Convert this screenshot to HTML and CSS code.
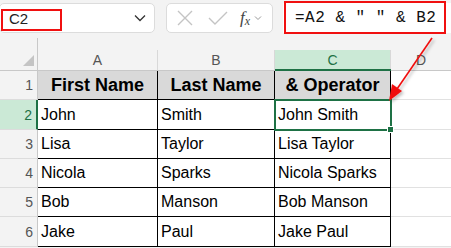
FILE: index.html
```html
<!DOCTYPE html>
<html lang="en">
   <head>
      <meta charset="UTF-8" />
      <meta name="viewport" content="width=device-width, initial-scale=1.0" />
      <title>Ampersand operator</title>
      <link rel="stylesheet" href="styles.css">
   </head>
   <body>
      <div class="wrap">
         <section class="toolbar">
            <div class="namebox">
               <span>C2</span>
               <svg class="chev" width="12" height="8" viewBox="0 0 12 8"><path d="M1 1.5 L6 6.5 L11 1.5" fill="none" stroke="#333" stroke-width="1.3"/></svg>
            </div>
            <div class="buttons">
               <svg width="18" height="18" viewBox="0 0 18 18"><path d="M2 2 L16 16 M16 2 L2 16" stroke="#c4c4c4" stroke-width="1.4" fill="none"/></svg>
               <svg width="20" height="16" viewBox="0 0 20 16"><path d="M1 8 L7 14 L19 2" stroke="#c4c4c4" stroke-width="1.4" fill="none"/></svg>
               <span class="fx">f<sub>x</sub></span>
               <svg width="8" height="6" viewBox="0 0 8 6"><path d="M1 1.5 L4 4.5 L7 1.5" fill="none" stroke="#999" stroke-width="1"/></svg>
            </div>
            <div class="formula">=A2 &amp; " " &amp; B2</div>
         </section>

         <section class="sheet">
            <div class="corner"><i></i></div>
            <div class="colhead"><span>A</span></div>
            <div class="colhead"><span>B</span></div>
            <div class="colhead active"><span>C</span></div>
            <div class="colhead last"><span>D</span></div>

            <div class="rowhead">1</div>
            <div class="cell th">First Name</div>
            <div class="cell th">Last Name</div>
            <div class="cell th">&amp; Operator</div>
            <div class="cell empty"></div>

            <div class="rowhead active">2</div>
            <div class="cell">John</div>
            <div class="cell">Smith</div>
            <div class="cell sel">John Smith</div>
            <div class="cell empty"></div>

            <div class="rowhead">3</div>
            <div class="cell">Lisa</div>
            <div class="cell">Taylor</div>
            <div class="cell">Lisa Taylor</div>
            <div class="cell empty"></div>

            <div class="rowhead">4</div>
            <div class="cell">Nicola</div>
            <div class="cell">Sparks</div>
            <div class="cell">Nicola Sparks</div>
            <div class="cell empty"></div>

            <div class="rowhead">5</div>
            <div class="cell">Bob</div>
            <div class="cell">Manson</div>
            <div class="cell">Bob Manson</div>
            <div class="cell empty"></div>

            <div class="rowhead">6</div>
            <div class="cell">Jake</div>
            <div class="cell">Paul</div>
            <div class="cell">Jake Paul</div>
            <div class="cell empty"></div>
         </section>

         <!-- annotations -->
         <div class="mark mark-name"></div>
         <div class="mark mark-formula"></div>
         <svg class="arrow" width="60" height="70" viewBox="0 0 60 70">
            <defs>
               <filter id="sh" x="-50%" y="-50%" width="200%" height="200%">
                  <feDropShadow dx="2" dy="2" stdDeviation="1.5" flood-color="#000" flood-opacity="0.25"/>
               </filter>
            </defs>
            <g filter="url(#sh)">
               <line x1="52" y1="2" x2="17" y2="53" stroke="#f01010" stroke-width="1.6"/>
               <path d="M9 65 L12 48 L22 55 Z" fill="#f01010"/>
            </g>
         </svg>
      </div>
   </body>
</html>
```

FILE: styles.css
```css
body {
   margin: 0;
   padding: 0;
   background-color: #fff;
}

div.wrap {
   position: relative;
   width: 451px;
   height: 248px;
   overflow: hidden;
   background-color: #f3f3f3;
   font-family: 'Liberation Sans', Arial, sans-serif;
}

section.toolbar {
   display: flex;
   align-items: center;
   height: 30px;
   padding-top: 3px;
}

div.namebox {
   box-sizing: border-box;
   width: 156px;
   height: 30px;
   margin-left: -1px;
   padding: 0 8px 0 9px;
   display: flex;
   justify-content: space-between;
   align-items: center;
   background-color: #fff;
   border: 1px solid #dcdcdc;
   border-radius: 5px;
   font-size: 15px;
   color: #222;
}

div.buttons {
   box-sizing: border-box;
   width: 107px;
   height: 30px;
   margin-left: 11px;
   padding: 0 7px 0 9px;
   display: flex;
   align-items: center;
   gap: 14px;
   background-color: #fff;
   border: 1px solid #dcdcdc;
   border-radius: 5px;
}

span.fx {
   margin-left: -2px;
   font-family: 'Liberation Serif', serif;
   font-style: italic;
   font-size: 17px;
   color: #444;
}

span.fx sub {
   font-size: 12px;
   vertical-align: -2px;
}

div.buttons svg:last-child {
   margin-left: -10px;
}

div.formula {
   flex: 1;
   box-sizing: border-box;
   height: 30px;
   margin-left: 10px;
   padding-left: 12px;
   display: flex;
   align-items: center;
   background-color: #fff;
   font-family: 'Liberation Mono', monospace;
   font-size: 16px;
   letter-spacing: 0.5px;
   color: #111;
}

section.sheet {
   display: grid;
   grid-template-columns: 38px 120px 117px 116px 1fr;
   grid-template-rows: 33px 29px 30px 29px 29px 29px 30px;
   margin-top: 5px;
   background-color: #fff;
}

div.corner {
   position: relative;
   background-color: #f3f3f3;
   border-right: 1px solid #c8c8c8;
   border-bottom: 1px solid #c8c8c8;
}

div.corner i {
   position: absolute;
   right: 3px;
   bottom: 4px;
   width: 0;
   height: 0;
   border-left: 11px solid transparent;
   border-bottom: 11px solid #c4c4c4;
}

div.colhead {
   box-sizing: border-box;
   padding-top: 12px;
   display: flex;
   background-color: #f3f3f3;
   border-bottom: 1px solid #c8c8c8;
}

div.colhead span {
   flex: 1;
   display: flex;
   justify-content: center;
   align-items: center;
   border-right: 1px solid #d8d8d8;
   font-size: 14px;
   color: #555;
}

div.colhead.last span {
   border-right: none;
}

div.colhead.active {
   border-bottom: 2px solid #1e7145;
}

div.colhead.active span {
   background-color: #cbe9d6;
   color: #1e7145;
}

div.rowhead {
   box-sizing: border-box;
   padding-right: 4px;
   display: flex;
   justify-content: flex-end;
   align-items: center;
   background-color: #f3f3f3;
   border-right: 1px solid #c8c8c8;
   border-bottom: 1px solid #dcdcdc;
   font-size: 14px;
   color: #555;
}

div.rowhead.active {
   background-color: #cbe9d6;
   color: #1e7145;
   border-right: 2px solid #1e7145;
}

div.cell {
   box-sizing: border-box;
   padding-left: 3px;
   display: flex;
   align-items: center;
   background-color: #fff;
   border-right: 1px solid #000;
   border-bottom: 1px solid #000;
   font-size: 16px;
   color: #000;
}

div.cell.th {
   justify-content: center;
   padding-left: 0;
   background-color: #d9d9d9;
   font-size: 18px;
   font-weight: bold;
}

div.cell.empty {
   border-right: none;
   border-bottom: 1px solid #e1e1e1;
}

div.cell.sel {
   position: relative;
   outline: 2px solid #1e7145;
   outline-offset: -1px;
}

div.cell.sel::after {
   content: '';
   position: absolute;
   right: -4px;
   bottom: -4px;
   width: 5px;
   height: 5px;
   background-color: #1e7145;
   border: 1px solid #fff;
}

div.mark {
   position: absolute;
   box-sizing: border-box;
   border: 2px solid #f01010;
}

div.mark-name {
   left: 1px;
   top: 9px;
   width: 61px;
   height: 22px;
}

div.mark-formula {
   left: 284px;
   top: 1px;
   width: 162px;
   height: 33px;
   border-width: 2.5px;
}

svg.arrow {
   position: absolute;
   left: 380px;
   top: 36px;
}
```
